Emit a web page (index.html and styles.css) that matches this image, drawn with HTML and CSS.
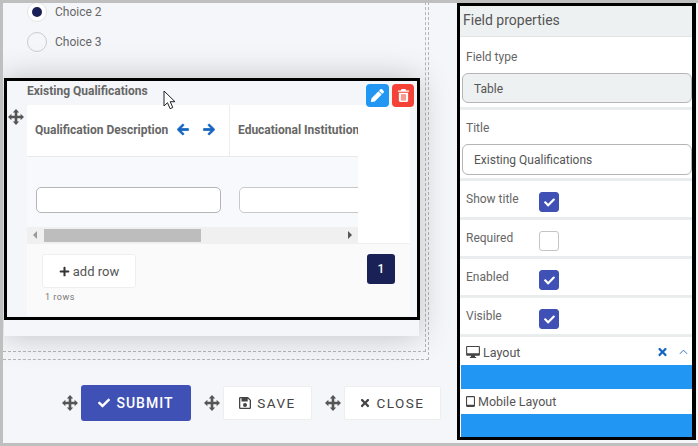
FILE: index.html
```html
<!DOCTYPE html>
<html lang="en">
<head>
<meta charset="utf-8">
<title>Form builder</title>
<link rel="stylesheet" href="styles.css">
</head>
<body>
<svg class="sprite" width="0" height="0" aria-hidden="true">
  <symbol id="i-move" viewBox="0 0 16 16"><path d="M8 0l3.200 3.400H9.300v3.300h3.300V4.800L16 8l-3.400 3.200V9.300H9.300v3.300h1.900L8 16l-3.200-3.400h1.900V9.300H3.400v1.900L0 8l3.400-3.200v1.900h3.300V3.400H4.800z"/></symbol>
  <symbol id="i-check" viewBox="0 0 512 512"><path d="M173.898 439.404l-166.4-166.4c-9.997-9.997-9.997-26.206 0-36.204l36.203-36.204c9.997-9.998 26.207-9.998 36.204 0L192 312.69 432.095 72.596c9.997-9.997 26.207-9.997 36.204 0l36.203 36.204c9.997 9.997 9.997 26.206 0 36.204l-294.4 294.401c-9.998 9.997-26.207 9.997-36.204-.001z"/></symbol>
  <symbol id="i-plus" viewBox="0 0 448 512"><path d="M416 208H272V64c0-17.67-14.33-32-32-32h-32c-17.67 0-32 14.33-32 32v144H32c-17.67 0-32 14.33-32 32v32c0 17.67 14.33 32 32 32h144v144c0 17.67 14.33 32 32 32h32c17.67 0 32-14.33 32-32V304h144c17.67 0 32-14.33 32-32v-32c0-17.67-14.33-32-32-32z"/></symbol>
  <symbol id="i-times" viewBox="0 0 352 512"><path d="M242.72 256l100.07-100.07c12.28-12.28 12.28-32.19 0-44.48l-22.24-22.24c-12.28-12.28-32.19-12.28-44.48 0L176 189.28 75.93 89.21c-12.28-12.28-32.19-12.28-44.48 0L9.21 111.45c-12.28 12.28-12.28 32.19 0 44.48L109.28 256 9.21 356.07c-12.28 12.28-12.28 32.19 0 44.48l22.24 22.24c12.28 12.28 32.2 12.28 44.48 0L176 322.72l100.07 100.07c12.28 12.28 32.2 12.28 44.48 0l22.24-22.24c12.28-12.28 12.28-32.19 0-44.48L242.72 256z"/></symbol>
  <symbol id="i-left" viewBox="0 0 448 512"><path d="M257.5 445.1l-22.2 22.2c-9.4 9.4-24.6 9.4-33.9 0L7 273c-9.4-9.4-9.4-24.6 0-33.9L201.4 44.7c9.4-9.4 24.6-9.4 33.9 0l22.2 22.2c9.5 9.5 9.3 25-.4 34.3L136.6 216H424c13.3 0 24 10.7 24 24v32c0 13.3-10.7 24-24 24H136.6l120.5 114.8c9.8 9.3 10 24.8.4 34.3z"/></symbol>
  <symbol id="i-right" viewBox="0 0 448 512"><path d="M190.5 66.9l22.2-22.2c9.4-9.4 24.6-9.4 33.9 0L441 239c9.4 9.4 9.4 24.6 0 33.9L246.6 467.3c-9.4 9.4-24.6 9.4-33.9 0l-22.2-22.2c-9.5-9.5-9.3-25 .4-34.3L311.4 296H24c-13.3 0-24-10.7-24-24v-32c0-13.3 10.7-24 24-24h287.4L190.9 101.2c-9.8-9.3-10-24.8-.4-34.3z"/></symbol>
  <symbol id="i-pencil" viewBox="0 0 512 512"><path d="M497.9 142.1l-46.1 46.1c-4.7 4.7-12.3 4.7-17 0l-111-111c-4.7-4.7-4.7-12.3 0-17l46.1-46.1c18.7-18.7 49.1-18.7 67.9 0l60.1 60.1c18.8 18.7 18.8 49.1 0 67.9zM284.2 99.8L21.6 362.4.4 483.9c-2.9 16.4 11.4 30.6 27.8 27.8l121.5-21.3 262.6-262.6c4.7-4.7 4.7-12.3 0-17l-111-111c-4.8-4.7-12.4-4.7-17.1 0z"/></symbol>
  <symbol id="i-trash" viewBox="0 0 12 14"><path d="M4 0h4l1 1.500h3V3H0V1.500h3zM1 4h10v8.500a1.500 1.500 0 0 1-1.500 1.500h-7A1.500 1.500 0 0 1 1 12.500z"/><rect x="3.200" y="5.500" width="5.600" height="7" fill="#fb9a94"/></symbol>
  <symbol id="i-save" viewBox="0 0 12 12"><path fill-rule="evenodd" d="M1.200 0H9l3 3v7.800a1.200 1.200 0 0 1-1.200 1.200H1.200A1.200 1.200 0 0 1 0 10.800V1.200A1.200 1.200 0 0 1 1.200 0zM1.300 1.300v9.400h9.400V3.600L8.700 1.600V4.500H2.500V1.300zM6 6a2 2 0 1 1 0 4 2 2 0 0 1 0-4z"/></symbol>
  <symbol id="i-desktop" viewBox="0 0 15 13"><path fill-rule="evenodd" d="M1 0h13a1 1 0 0 1 1 1v8.500a1 1 0 0 1-1 1H9.500l.4 1.300h1v1.200H4.100v-1.200h1l.4-1.300H1a1 1 0 0 1-1-1V1a1 1 0 0 1 1-1zM1.200 1.200v6.600h12.600V1.200z"/></symbol>
  <symbol id="i-tablet" viewBox="0 0 10 12"><path fill-rule="evenodd" d="M1.200 0h7.600A1.200 1.200 0 0 1 10 1.200v9.600A1.200 1.200 0 0 1 8.800 12H1.200A1.200 1.200 0 0 1 0 10.800V1.200A1.200 1.200 0 0 1 1.200 0zM1.200 1.200v8.400h7.600V1.200z"/></symbol>
  <symbol id="i-up" viewBox="0 0 10 6"><path d="M1 5l4-4 4 4" fill="none" stroke="currentColor" stroke-width="1"/></symbol>
</svg>

<div class="screen">
  <main class="canvas">
    <div class="drop-outer">
      <div class="drop-inner">
        <div class="choices">
          <label class="choice"><span class="radio radio-on"></span>Choice 2</label>
          <label class="choice"><span class="radio"></span>Choice 3</label>
        </div>

        <div class="field-lift">
          <section class="field">
            <div class="field-head">
              <h2 class="field-title">Existing Qualifications</h2>
              <div class="field-tools">
                <button class="tool tool-edit" type="button"><svg class="ico-13"><use href="#i-pencil"/></svg></button>
                <button class="tool tool-delete" type="button"><svg class="ico-13"><use href="#i-trash"/></svg></button>
              </div>
            </div>
            <svg class="move move-field"><use href="#i-move"/></svg>
            <div class="table-card">
              <div class="table-scroll">
                <div class="table-head">
                  <div class="cell cell-first">
                    <span class="col-name">Qualification Description</span>
                    <svg class="arrow"><use href="#i-left"/></svg>
                    <svg class="arrow"><use href="#i-right"/></svg>
                  </div>
                  <div class="cell"><span class="col-name">Educational Institution</span></div>
                </div>
                <div class="table-row">
                  <div class="cell-input"><input class="text-input" type="text" aria-label="Qualification Description"></div>
                  <div class="cell-input"><input class="text-input text-input-cut" type="text" aria-label="Educational Institution"></div>
                </div>
                <div class="scrollbar">
                  <span class="sb-arrow sb-left"></span>
                  <span class="sb-thumb"></span>
                  <span class="sb-arrow sb-right"></span>
                </div>
              </div>
              <div class="table-foot">
                <div class="foot-left">
                  <button class="add-row" type="button"><svg class="ico-11"><use href="#i-plus"/></svg>add row</button>
                  <span class="row-count">1 rows</span>
                </div>
                <span class="page">1</span>
              </div>
            </div>
          </section>
        </div>
      </div>
    </div>

    <div class="actions">
      <svg class="move"><use href="#i-move"/></svg>
      <button class="btn btn-primary" type="button"><svg class="ico-12"><use href="#i-check"/></svg>SUBMIT</button>
      <svg class="move move-gap"><use href="#i-move"/></svg>
      <button class="btn btn-save" type="button"><svg class="ico-12"><use href="#i-save"/></svg>SAVE</button>
      <svg class="move move-gap"><use href="#i-move"/></svg>
      <button class="btn btn-close" type="button"><svg class="ico-10"><use href="#i-times"/></svg>CLOSE</button>
    </div>
  </main>

  <aside class="panel">
    <h2 class="panel-title">Field properties</h2>
    <div class="prop prop-type">
      <span class="prop-label">Field type</span>
      <div class="prop-value prop-disabled">Table</div>
    </div>
    <div class="prop prop-title">
      <span class="prop-label">Title</span>
      <div class="prop-value">Existing Qualifications</div>
    </div>
    <div class="prop prop-check"><span class="check-label">Show title</span><span class="check check-on"><svg class="ico-11"><use href="#i-check"/></svg></span></div>
    <div class="prop prop-check"><span class="check-label">Required</span><span class="check"></span></div>
    <div class="prop prop-check"><span class="check-label">Enabled</span><span class="check check-on"><svg class="ico-11"><use href="#i-check"/></svg></span></div>
    <div class="prop prop-check"><span class="check-label">Visible</span><span class="check check-on"><svg class="ico-11"><use href="#i-check"/></svg></span></div>
    <div class="layout-head">
      <svg class="layout-ico"><use href="#i-desktop"/></svg>
      <span class="layout-name">Layout</span>
      <svg class="layout-x"><use href="#i-times"/></svg>
      <svg class="layout-up"><use href="#i-up"/></svg>
    </div>
    <div class="layout-bar"></div>
    <div class="layout-head layout-mobile">
      <svg class="tablet-ico"><use href="#i-tablet"/></svg>
      <span class="layout-name">Mobile Layout</span>
    </div>
    <div class="layout-bar layout-bar-last"></div>
  </aside>

  <svg class="cursor" width="14" height="20" viewBox="0 0 14 20"><path d="M1 1v15l3.500-3.300 2.600 6 2.700-1.200-2.600-5.800H12z" fill="#fff" stroke="#222" stroke-width="1"/></svg>
</div>
</body>
</html>
```

FILE: styles.css
```css
* { box-sizing: border-box; }
html, body { margin: 0; padding: 0; }
body { font-family: Roboto, "Liberation Sans", sans-serif; color: #666; }
.sprite { position: absolute; }
button { font-family: inherit; cursor: pointer; }
svg { fill: currentColor; display: block; flex: none; }

.screen {
  position: relative;
  width: 698px;
  height: 446px;
  display: flex;
  overflow: hidden;
  background: #f5f6fa;
  border-top: 3px solid #bfbfbf;
  border-left: 3px solid #bfbfbf;
  border-bottom: 3px solid #bfbfbf;
}

.canvas { width: 454px; flex: none; }
.drop-outer {
  width: 426px;
  height: 363px;
  margin-top: -6px;
  padding: 0 2px 7px 0;
  border-right: 1px dashed #b5b5b5;
  border-bottom: 1px dashed #b5b5b5;
}
.drop-inner {
  height: 100%;
  border-right: 1px dashed #b5b5b5;
  border-bottom: 1px dashed #b5b5b5;
}

.choices { padding-left: 24px; height: 81px; }
.choice { display: flex; align-items: center; height: 30px; font-size: 12px; color: #666; }
.radio {
  width: 20px; height: 20px; margin-right: 8px;
  border: 1px solid #ccc; border-radius: 50%;
  display: flex; align-items: center; justify-content: center;
}
.radio-on { background: #fff; border-color: #e4e4e4; }
.radio-on::after { content: ""; width: 10px; height: 10px; border-radius: 50%; background: #1a2156; }

.field-lift {
  width: 415px;
  height: 258px;
  margin-left: 1px;
  background: #f5f6fa;
  box-shadow: 0 0 30px rgba(0,0,0,.22);
}
.field {
  position: relative;
  width: 416px;
  height: 242px;
  padding: 0 6px 0 20px;
  border: 3px solid #000;
}
.field-head { display: flex; justify-content: space-between; height: 24px; }
.field-title { margin: 3px 0 0; font-size: 12px; font-weight: 700; color: #666; line-height: 14px; }
.field-tools { display: flex; gap: 3px; margin: 3px -3px 0 0; height: 23px; }
.tool { width: 23px; height: 23px; padding: 0; border: 0; border-radius: 4px; color: #fff; display: flex; align-items: center; justify-content: center; }
.tool-edit { background: #2196f3; }
.tool-delete { width: 22px; background: #f44336; }
.ico-13 { width: 13px; height: 13px; }
.ico-12 { width: 12px; height: 12px; }
.ico-11 { width: 11px; height: 11px; }
.ico-10 { width: 10px; height: 12px; }

.move { width: 16px; height: 16px; color: #555; }
.move-field { position: absolute; left: 1px; top: 28px; }

.table-card {
  width: 383px;
  height: 211px;
  background: #fff;
  border-radius: 3px;
  overflow: hidden;
  display: flex;
  flex-direction: column;
}
.table-scroll { width: 331px; height: 138px; overflow: hidden; flex: none; }
.table-head { display: flex; width: 560px; height: 52px; border-bottom: 1px solid #eaeaea; background: #fff; }
.cell { width: 203px; flex: none; display: flex; align-items: center; padding: 0 0 2px 8px; }
.cell-first { border-right: 1px solid #eee; }
.col-name { font-size: 12px; font-weight: 700; color: #666; white-space: nowrap; }
.arrow { width: 12px; height: 13px; color: #1565c0; stroke: currentColor; stroke-width: 30px; margin-left: 9px; }
.arrow + .arrow { margin-left: 14px; }
.table-row { display: flex; width: 560px; height: 70px; background: #f8f9fc; }
.cell-input { width: 203px; flex: none; padding: 30px 0 0 9px; }
.text-input { display: block; width: 185px; height: 26px; border: 1px solid #b5b5b5; border-radius: 5px; background: #fff; outline: 0; padding: 0; }
.text-input-cut { border-color: #c9c9c9; }

.scrollbar { display: flex; align-items: center; height: 16px; background: #f0f0f0; }
.sb-thumb { width: 157px; height: 13px; background: #bdbdbd; margin-left: 7px; }
.sb-arrow { width: 0; height: 0; border-style: solid; border-color: transparent; }
.sb-left { border-width: 4px 4px 4px 0; border-right-color: #999; margin-left: 6px; }
.sb-right { border-width: 4px 0 4px 4px; border-left-color: #555; margin-left: 147px; }

.table-foot {
  flex: 1;
  display: flex;
  justify-content: space-between;
  align-items: flex-start;
  padding: 10px 15px 0 15px;
  background: #fafafa;
  border-top: 1px solid #f0f0f0;
}
.foot-left { display: flex; flex-direction: column; align-items: flex-start; }
.add-row {
  width: 94px; height: 34px; padding: 0;
  display: flex; align-items: center; justify-content: center; gap: 3px;
  background: #fff; border: 1px solid #efefef; border-radius: 3px;
  font-size: 13px; color: #555;
}
.add-row svg { color: #333; }
.row-count { font-size: 9px; color: #777; margin: 4px 0 0 3px; letter-spacing: .5px; }
.page {
  width: 28px; height: 30px;
  display: flex; align-items: center; justify-content: center;
  background: #1a2156; color: #fff; border-radius: 3px;
  font-size: 12px; font-weight: 500;
}

.actions { display: flex; align-items: center; padding: 25px 0 0 59px; }
.btn {
  height: 34px; padding: 0 0 1px;
  display: flex; align-items: center; justify-content: center; gap: 6px;
  background: #fff; border: 1px solid #eee; border-radius: 2px;
  font-size: 13.500px; letter-spacing: 1.500px; color: #444;
  margin-left: 3px;
}
.btn-primary { width: 110px; height: 36px; background: #3f51b5; border: 0; border-radius: 3px; color: #fff; font-weight: 500; letter-spacing: 1px; font-size: 14px; }
.btn-save { width: 89px; }
.btn-close { width: 97px; }
.move-gap { margin-left: 13px; }

.panel {
  width: 239px;
  height: 437px;
  flex: none;
  border-style: solid;
  border-color: #000;
  border-width: 3px 4px 3px 3px;
  background: #fff;
  overflow: hidden;
}
.panel-title {
  margin: 0; height: 31px; padding: 0 0 2px 3px;
  display: flex; align-items: center;
  background: #eef1f2; border-bottom: 1px solid #dfe4e6;
  font-size: 14px; font-weight: 400; color: #555;
}
.prop { border-bottom: 3px solid #e9edee; }
.prop-type { height: 73px; padding-left: 2px; }
.prop-title { height: 71px; padding-left: 2px; }
.prop-label { display: block; font-size: 12px; color: #666; line-height: 16px; padding-left: 4px; }
.prop-type .prop-label { height: 36px; padding-top: 12px; }
.prop-title .prop-label { height: 34px; padding-top: 10px; }
.prop-value {
  height: 30px; width: 230px;
  display: flex; align-items: center; padding-left: 11px;
  border: 1px solid #b5b5b5; border-radius: 6px;
  font-size: 12px; color: #555; background: #fff;
}
.prop-title .prop-value { height: 31px; }
.prop-disabled { background: #eef1f2; padding-top: 2px; }
.prop-check { display: flex; align-items: flex-start; height: 39px; padding-left: 6px; }
.check-label { width: 73px; margin-top: 11px; font-size: 12px; line-height: 14px; color: #666; }
.check {
  width: 20px; height: 20px; margin-top: 11px;
  border: 1px solid #c4c4c4; border-radius: 3px;
  background: #fff; display: flex; align-items: center; justify-content: center;
}
.check-on { background: #3f51b5; border-color: #3f51b5; color: #fff; }

.layout-head { display: flex; align-items: center; height: 28px; padding: 2px 4px 0 6px; font-size: 12.500px; color: #555; }
.layout-name { margin-left: 3px; }
.layout-ico { width: 14px; height: 12px; color: #444; }
.tablet-ico { width: 9px; height: 11px; color: #444; }
.layout-x { width: 9px; height: 12px; color: #1565c0; margin-left: auto; }
.layout-up { width: 9px; height: 6px; color: #1565c0; margin-left: 12px; }
.layout-mobile { height: 25px; padding: 0 4px 1px 6px; }
.layout-bar { height: 24px; background: #2196f3; margin-left: 1px; }
.layout-bar-last { height: 23px; }

.cursor { position: absolute; left: 160px; top: 87px; }
```
